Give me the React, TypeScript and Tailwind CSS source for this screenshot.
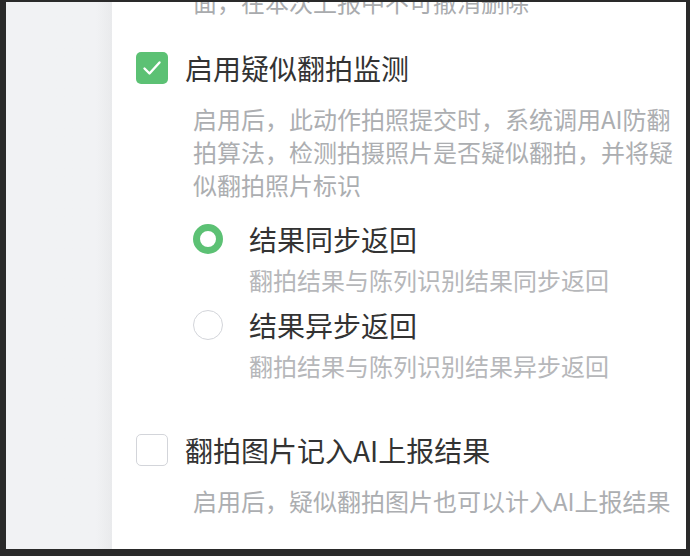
import React from "react";

const font = { fontFamily: '"Noto Sans CJK SC", "Noto Sans", sans-serif' };

function Check() {
  return (
    <svg width="32" height="32" viewBox="0 0 32 32" fill="none">
      <path d="M8.5 16.5 L13.5 21.5 L23.5 10.5" stroke="#fff" strokeWidth="2.4" strokeLinecap="round" strokeLinejoin="round" />
    </svg>
  );
}

export default function App() {
  return (
    <div className="w-[690px] h-[556px] bg-[#2a2a2a] pt-[2px] pl-[6px] pr-[4px] pb-[7px] overflow-hidden" style={font}>
      <div className="flex h-full w-full overflow-hidden">
        <div className="w-[106px] h-full bg-gradient-to-r from-[#f1f2f4] from-85% to-[#e9eaec]" />
        <div className="flex-1 h-full bg-white pl-[24px] overflow-hidden">
          <div className="pl-[57px] mt-[-15px] text-[24px] leading-[30px] text-[#a9abae] whitespace-nowrap">
            面，在本次上报中不可撤消删除
          </div>

          <div className="mt-[31px] flex items-center">
            <div className="w-[32px] h-[32px] rounded-[5px] bg-[#5cc174] flex items-center justify-center">
              <Check />
            </div>
            <span className="ml-[17px] text-[28px] leading-[40px] text-[#333333]">启用疑似翻拍监测</span>
          </div>

          <div className="pl-[57px] mt-[14px] text-[24px] leading-[33px] text-[#acaeb1] whitespace-nowrap">
            <div>启用后，此动作拍照提交时，系统调用AI防翻</div>
            <div>拍算法，检测拍摄照片是否疑似翻拍，并将疑</div>
            <div>似翻拍照片标识</div>
          </div>

          <div className="pl-[57px] mt-[18px] flex flex-col gap-[9px]">
            <div>
              <div className="flex items-center">
                <div className="w-[30px] h-[30px] rounded-full border-[7px] border-[#5cc174] bg-white" />
                <span className="ml-[26px] text-[28px] leading-[40px] text-[#333333]">结果同步返回</span>
              </div>
              <div className="pl-[56px] mt-[4px] text-[24px] leading-[33px] text-[#b6b7ba] whitespace-nowrap">
                翻拍结果与陈列识别结果同步返回
              </div>
            </div>
            <div>
              <div className="flex items-center">
                <div className="w-[30px] h-[30px] rounded-full border-[1.5px] border-[#d3d5da] bg-white" />
                <span className="ml-[26px] text-[28px] leading-[40px] text-[#333333]">结果异步返回</span>
              </div>
              <div className="pl-[56px] mt-[4px] text-[24px] leading-[33px] text-[#b6b7ba] whitespace-nowrap">
                翻拍结果与陈列识别结果异步返回
              </div>
            </div>
          </div>

          <div className="mt-[48px] flex items-center">
            <div className="w-[32px] h-[32px] rounded-[5px] border-[1.5px] border-[#d3d5da] bg-white" />
            <span className="ml-[17px] text-[28px] leading-[40px] text-[#333333]">翻拍图片记入AI上报结果</span>
          </div>

          <div className="pl-[57px] mt-[14px] text-[24px] leading-[33px] text-[#acaeb1] whitespace-nowrap">
            启用后，疑似翻拍图片也可以计入AI上报结果
          </div>
        </div>
      </div>
    </div>
  );
}
